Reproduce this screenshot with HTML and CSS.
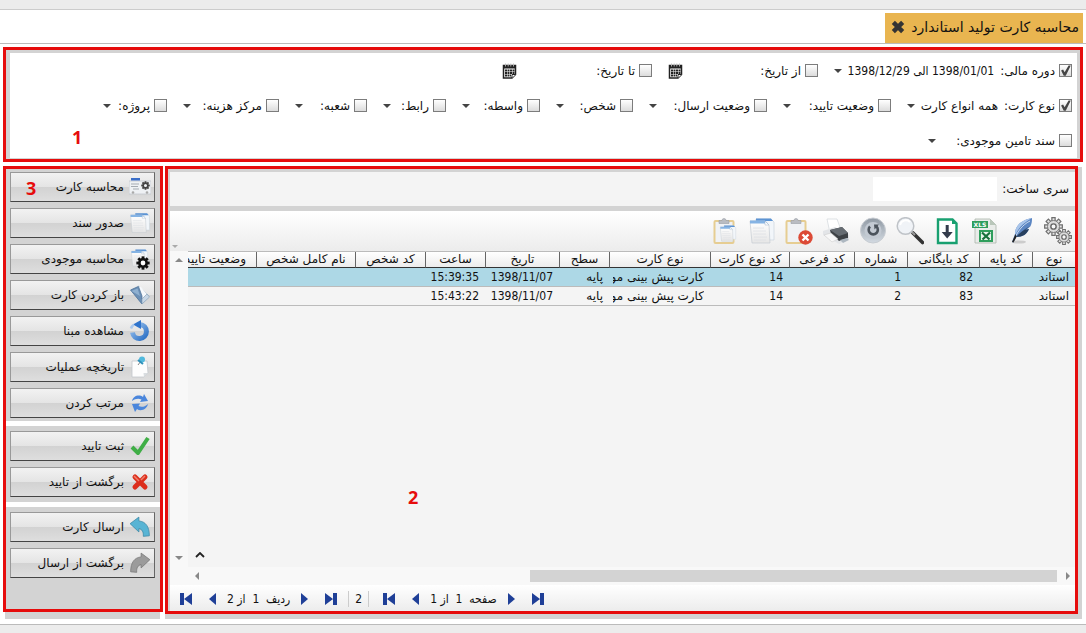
FILE: index.html
```html
<!DOCTYPE html>
<html lang="fa" dir="rtl">
<head>
<meta charset="utf-8">
<title>محاسبه کارت تولید استاندارد</title>
<link rel="stylesheet" href="styles.css">
</head>
<body>
<svg class="defs" aria-hidden="true">
  <defs>
    <linearGradient id="gBlue" x1="0" y1="0" x2="1" y2="1"><stop offset="0" stop-color="#9cc3ee"/><stop offset="1" stop-color="#2a6fc4"/></linearGradient>
    <linearGradient id="gPaper" x1="0" y1="0" x2="0" y2="1"><stop offset="0" stop-color="#ffffff"/><stop offset="1" stop-color="#e6e6e6"/></linearGradient>
    <linearGradient id="gGray" x1="0" y1="0" x2="0" y2="1"><stop offset="0" stop-color="#8f99a3"/><stop offset="1" stop-color="#d3dae2"/></linearGradient>
    <symbol id="docs" viewBox="0 0 28 28">
      <path d="M8 2h15l3 3v18H8z" fill="#f2f6fa" stroke="#ccd4dc" stroke-width=".7"/><path d="M8 1.500h15l2 2.500H8z" fill="#5c94d4"/>
      <path d="M2 4h15l4 4 1 18H4z" fill="url(#gPaper)" stroke="#c5cbd2" stroke-width=".7"/><path d="M2 3.500h15l3 3H2z" fill="#86b4e4"/><path d="M17 4v4h4z" fill="#fff" stroke="#9fb3c8" stroke-width=".5"/>
      <path d="M5 11h11M5 14h13M5 17h13M6 20h13M6 23h12" stroke="#dde0e4" stroke-width=".8"/>
    </symbol>
    <symbol id="clip" viewBox="0 0 28 28">
      <rect x="1.500" y="4" width="19" height="22" rx="1" fill="#f0f2f5" stroke="#e6cd92" stroke-width="2"/>
      <path d="M6 6.500V3.500h3a2 2 0 0 1 4 0H16v3z" fill="#b9bcc2" stroke="#999ea6" stroke-width=".6"/>
    </symbol>
    <symbol id="undo" viewBox="0 0 20 20"><path d="M1 7 9 1v3.500c6 .5 9.500 5 9.500 13.500l-5.500.5c.3-4-1-6.500-4-7v3z"/></symbol>
    <symbol id="cal" viewBox="0 0 15 16">
      <path d="M1.500 2.500h12v9l-3.500 3.500h-8.500z" fill="#fff" stroke="#222" stroke-width="1.500"/><path d="M1 2h13v3.500H1z" fill="#222"/><path d="M3.500 .5v3M6.200 .5v3M8.800 .5v3M11.500 .5v3" stroke="#bbb" stroke-width=".9"/><path d="M3 7.500h9.500M3 10h9.500M3 12.500h6" stroke="#222" stroke-width="1.800" stroke-dasharray="2 .5"/><path d="M10 15v-3.500h3.500" fill="#fff" stroke="#222"/>
    </symbol>
    <symbol id="first" viewBox="0 0 12 12"><path d="M0 0h4v12H0zM12 0v12L4 6z"/></symbol>
    <symbol id="last" viewBox="0 0 12 12"><path d="M8 0h4v12H8zM0 0v12l8-6z"/></symbol>
    <symbol id="prev" viewBox="0 0 7 12"><path d="M7 0v12L0 6z"/></symbol>
    <symbol id="next" viewBox="0 0 7 12"><path d="M0 0v12l7-6z"/></symbol>
    <symbol id="gear" viewBox="-10 -10 20 20">
      <g><path id="tooth" d="M-2-9.500h4v4h-4z"/><use href="#tooth" transform="rotate(45)"/><use href="#tooth" transform="rotate(90)"/><use href="#tooth" transform="rotate(135)"/><use href="#tooth" transform="rotate(180)"/><use href="#tooth" transform="rotate(225)"/><use href="#tooth" transform="rotate(270)"/><use href="#tooth" transform="rotate(315)"/></g>
      <circle r="5.200" fill="none" stroke="currentColor" stroke-width="3.600"/>
    </symbol>
    <symbol id="gearline" viewBox="-10 -10 20 20">
      <g fill="#e4e4e4" stroke="#6f6f6f" stroke-width="1.300"><path id="tooth2" d="M-1.700-5.500v-3.800h3.400v3.800"/><use href="#tooth2" transform="rotate(45)"/><use href="#tooth2" transform="rotate(90)"/><use href="#tooth2" transform="rotate(135)"/><use href="#tooth2" transform="rotate(180)"/><use href="#tooth2" transform="rotate(225)"/><use href="#tooth2" transform="rotate(270)"/><use href="#tooth2" transform="rotate(315)"/></g>
      <circle r="6.300" fill="#dcdcdc" stroke="#777" stroke-width="1"/><circle r="2.800" fill="#f8f8f8" stroke="#666" stroke-width="1.500"/>
    </symbol>
  </defs>
</svg>

<div class="strip strip-top"></div>
<nav class="tabs">
  <div class="tab"><span>محاسبه کارت تولید استاندارد</span>
    <button class="tab-close" aria-label="بستن"><svg viewBox="0 0 12 12"><path d="M2 2l8 8M10 2l-8 8" stroke="#333" stroke-width="3.800"/></svg></button>
  </div>
</nav>

<section class="filters">
  <div class="filters-body">
    <div class="filter-row row-period">
      <div class="field"><input type="checkbox" id="f1" checked><label for="f1">دوره مالی:</label><span class="drop"><select class="num" aria-label="دوره مالی"><option>1398/01/01 الی 1398/12/29</option></select></span></div>
      <div class="field"><input type="checkbox" id="f2"><label for="f2">از تاریخ:</label><input class="date" type="text" aria-label="از تاریخ"><button class="cal" aria-label="تقویم"><svg><use href="#cal"/></svg></button></div>
      <div class="field"><input type="checkbox" id="f3"><label for="f3">تا تاریخ:</label><input class="date" type="text" aria-label="تا تاریخ"><button class="cal" aria-label="تقویم"><svg><use href="#cal"/></svg></button></div>
    </div>
    <div class="filter-row row-kind">
      <div class="field"><input type="checkbox" id="k1" checked><label for="k1">نوع کارت:</label><span class="drop"><select aria-label="نوع کارت"><option>همه انواع کارت</option></select></span></div>
      <div class="field"><input type="checkbox" id="k2"><label for="k2">وضعیت تایید:</label><span class="drop"><select aria-label="وضعیت تایید"></select></span></div>
      <div class="field"><input type="checkbox" id="k3"><label for="k3">وضعیت ارسال:</label><span class="drop"><select aria-label="وضعیت ارسال"></select></span></div>
      <div class="field"><input type="checkbox" id="k4"><label for="k4">شخص:</label><span class="drop"><select aria-label="شخص"></select></span></div>
      <div class="field"><input type="checkbox" id="k5"><label for="k5">واسطه:</label><span class="drop"><select aria-label="واسطه"></select></span></div>
      <div class="field"><input type="checkbox" id="k6"><label for="k6">رابط:</label><span class="drop"><select aria-label="رابط"></select></span></div>
      <div class="field"><input type="checkbox" id="k7"><label for="k7">شعبه:</label><span class="drop"><select aria-label="شعبه"></select></span></div>
      <div class="field"><input type="checkbox" id="k8"><label for="k8">مرکز هزینه:</label><span class="drop"><select aria-label="مرکز هزینه"></select></span></div>
      <div class="field"><input type="checkbox" id="k9"><label for="k9">پروژه:</label><span class="drop"><select aria-label="پروژه"></select></span></div>
    </div>
    <div class="filter-row row-stock">
      <div class="field"><input type="checkbox" id="s1"><label for="s1">سند تامین موجودی:</label><span class="drop"><select aria-label="سند تامین موجودی"></select></span></div>
    </div>
  </div>
  <span class="mark mark-1">1</span>
</section>

<div class="workspace">
  <main class="panel">
    <div class="search"><label for="series">سری ساخت:</label><input id="series" type="text"></div>

    <div class="toolbar">
      <button aria-label="تنظیمات"><svg viewBox="0 0 28 28"><svg x="0" y="0" width="19" height="19"><use href="#gearline"/></svg><svg x="12" y="12" width="16" height="16"><use href="#gearline"/></svg></svg></button>
      <button aria-label="ویرایش"><svg viewBox="0 0 28 28"><ellipse cx="12" cy="25" rx="7" ry="1.600" fill="#ccc"/><path d="M25 1C14 3 8 9 8 17l-3 8 1.500.5L9 20c7 0 11-3 13-8l-2 .3 3.500-3C25 6 25 4 25 1z" fill="#5c86c2"/><path d="M25 1C14 3 8 9 8 17l1-.5C12 10 18 5 25 1z" fill="#a9c5ea"/><path d="M9 20c7 0 11-3 13-8l-4 1 5-4C17 13 12 16 9 20z" fill="#27405f"/><path d="M23 4C15 8 10 15 6 25" fill="none" stroke="#e4edf8" stroke-width=".8"/><path d="M8.500 17 5 25l1.500.5L9.500 20z" fill="#222"/></svg></button>
      <button aria-label="اکسل"><svg viewBox="0 0 28 28"><path d="M5 2h15l6 6v18H5z" fill="#e9ece9" stroke="#a9b5aa" stroke-width=".8"/><path d="M20 2v6h6z" fill="#b9c7ba"/><rect x="2" y="4" width="16" height="7" fill="#2f9e5c"/><text x="10" y="10" class="xls">XLS</text><path d="M9 13h14v12H9z" fill="#2f9e5c"/><path d="M11 15h10v8H11z" fill="#e7f3ea"/><path d="m12 15.500 7.500 7M20 15.500l-7.500 7" stroke="#17713c" stroke-width="2.200"/></svg></button>
      <button aria-label="دریافت"><svg viewBox="0 0 28 28"><path d="M5 2.500h14.500l4 4V26H5z" fill="#fff" stroke="#18a070" stroke-width="2.400"/><path d="M19 2v5h5" fill="#18a070"/><path d="M12.700 8h3v7h4l-5.500 6.500L8.700 15h4z" fill="#343c4c"/></svg></button>
      <button aria-label="جستجو"><svg viewBox="0 0 28 28"><path d="m17 16 9.500 9.500" stroke="#333" stroke-width="3.600" stroke-linecap="round"/><path d="m15 14 4 4" stroke="#999" stroke-width="2"/><circle cx="9.500" cy="9" r="8.300" fill="#f0f3f7" stroke="#bfc3c8" stroke-width="1.500"/><path d="M4 8a6 6 0 0 1 10-3" fill="none" stroke="#fff" stroke-width="2"/></svg></button>
      <button aria-label="بازخوانی"><svg viewBox="0 0 28 28"><circle cx="14" cy="13.500" r="12.500" fill="url(#gGray)" stroke="#c7ccd2"/><circle cx="14" cy="13.500" r="8.500" fill="#c3cad3"/><path d="M11 9.500a4.600 4.600 0 1 0 6.500 0" fill="none" stroke="#4b535c" stroke-width="2.600"/><path d="M15 7.500h5l-4.500 5z" fill="#4b535c"/></svg></button>
      <button aria-label="چاپ"><svg viewBox="0 0 28 28"><path d="M5 2h10l4 11-11 3z" fill="#fff" stroke="#d6dade" stroke-width=".8"/><path d="m1 14 12-4 14 8v4l-10 5L1 18z" fill="#e3e5e8"/><path d="m8 13 12-3 6 6v5l-9 3-8-7z" fill="#3e4246"/><path d="m8 13 12-3 6 6-9 3z" fill="#666c72"/><path d="m2 18 7-2 7 6-6 3z" fill="#f8f8f8" stroke="#c7c7c7" stroke-width=".5"/><path d="m18 23 7-2 2 2-6 3z" fill="#aeb8c1"/></svg></button>
      <button aria-label="حذف"><svg viewBox="0 0 28 28"><use href="#clip"/><circle cx="20.500" cy="20.500" r="7.200" fill="#dc4a36"/><path d="m17.500 17.500 6 6M23.500 17.500l-6 6" stroke="#fff" stroke-width="2.400"/></svg></button>
      <button aria-label="رونوشت"><svg><use href="#docs"/></svg></button>
      <button aria-label="چسباندن"><svg viewBox="0 0 28 28"><use href="#clip" x="2"/><svg x="8" y="7" width="18" height="19"><use href="#docs"/></svg></svg></button>
      <span class="grip"></span>
    </div>

    <div class="grid">
      <div class="grid-view">
        <table>
          <colgroup><col class="c43"><col class="c53"><col class="c72"><col class="c53"><col class="c65"><col class="c79"><col class="c101"><col class="c50"><col class="c74"><col class="c60"><col class="c70"><col class="c99"><col></colgroup>
          <thead><tr><th>نوع</th><th>کد پایه</th><th>کد بایگانی</th><th>شماره</th><th>کد فرعی</th><th>کد نوع کارت</th><th>نوع کارت</th><th>سطح</th><th>تاریخ</th><th>ساعت</th><th>کد شخص</th><th>نام کامل شخص</th><th>وضعیت تایید</th></tr></thead>
          <tbody>
            <tr class="selected"><td><div>استاند</div></td><td></td><td class="num">82</td><td class="num">1</td><td></td><td class="num">14</td><td><div>کارت پیش بینی مواد</div></td><td>پایه</td><td class="num">1398/11/07</td><td class="num">15:39:35</td><td></td><td></td><td></td></tr>
            <tr><td><div>استاند</div></td><td></td><td class="num">83</td><td class="num">2</td><td></td><td class="num">14</td><td><div>کارت پیش بینی مواد</div></td><td>پایه</td><td class="num">1398/11/07</td><td class="num">15:43:22</td><td></td><td></td><td></td></tr>
          </tbody>
        </table>
        <button class="collapse" aria-label="بالا"><svg viewBox="0 0 10 6"><path d="m1 5 4-4 4 4" fill="none" stroke="#222" stroke-width="1.800"/></svg></button>
      </div>
      <div class="vscroll"><i class="arrow up"></i><i class="arrow down"></i></div>
    </div>
    <div class="hscroll"><i class="arrow right"></i><div class="track"><div class="thumb"></div></div><i class="arrow left"></i></div>

    <div class="pager num" dir="ltr">
      <button class="wide to-first" aria-label="اولین ردیف"><svg><use href="#first"/></svg></button>
      <button aria-label="ردیف قبل"><svg><use href="#prev"/></svg></button>
      <span class="page-text" dir="rtl">ردیف&nbsp; 1 &nbsp;از 2</span>
      <button aria-label="ردیف بعد"><svg><use href="#next"/></svg></button>
      <button class="wide to-last" aria-label="آخرین ردیف"><svg><use href="#last"/></svg></button>
      <span class="total">2</span>
      <button class="wide to-first" aria-label="اولین صفحه"><svg><use href="#first"/></svg></button>
      <button aria-label="صفحه قبل"><svg><use href="#prev"/></svg></button>
      <span class="page-text" dir="rtl">صفحه&nbsp; 1 &nbsp;از 1</span>
      <button aria-label="صفحه بعد"><svg><use href="#next"/></svg></button>
      <button class="wide to-last" aria-label="آخرین صفحه"><svg><use href="#last"/></svg></button>
    </div>
    <span class="mark mark-2">2</span>
  </main>

  <aside class="side">
    <div class="group group-main">
      <button><svg viewBox="0 0 22 20"><path d="M0 4h22v13H0z" fill="#eef1f4" stroke="#c3c8ce" stroke-width=".8"/><path d="M2 1h9v2.500H2z" fill="#3c6fc8"/><path d="M2 7h8M2 9.500h7M4 12h6" stroke="#a5abb2"/><circle cx="4" cy="15.500" r="1.300" fill="#aaa"/><circle cx="18" cy="15.500" r="1.300" fill="#aaa"/><svg x="12" y="4" width="9" height="9" fill="#444" color="#444"><use href="#gear"/></svg></svg>محاسبه کارت</button>
      <button><svg><use href="#docs"/></svg>صدور سند</button>
      <button><svg viewBox="0 0 22 22"><svg x="1" y="0" width="19" height="20"><use href="#docs"/></svg><circle cx="14" cy="15" r="3.500" fill="#fff"/><svg x="7" y="8" width="14" height="14" fill="#111" color="#111"><use href="#gear"/></svg></svg>محاسبه موجودی</button>
      <button><svg viewBox="0 0 22 22"><path d="m2 6 8-4 10 10-7 8z" fill="#dfe8f0" stroke="#9ab0c4" stroke-width=".7"/><path d="m9 2 3 1 8 10-6 5z" fill="#f6f9fc"/><path d="m1.500 6 8-3.500L13 12v8z" fill="#6c90b6" stroke="#4a6f95" stroke-width=".7"/><path d="m2.500 7 6-2.500L11 12z" fill="#8fb0d0"/><path d="m13 20 7.500-7-2.500-3-5 5z" fill="#c8d7e6" stroke="#8aa3ba" stroke-width=".7"/></svg>باز کردن کارت</button>
      <button><svg viewBox="0 0 22 22"><path d="M11 4.500a7 7 0 1 1-7.500 8" fill="none" stroke="url(#gBlue)" stroke-width="5"/><path d="M12 0v9L4 4.500z" fill="#2f74cc"/><path d="M2 8.500a8 8 0 0 1 3-4" fill="none" stroke="#a8c8ee" stroke-width="2.500"/></svg>مشاهده مبنا</button>
      <button><svg viewBox="0 0 22 22"><path d="M3 5h15l1 12-4 4H3z" fill="#fdfdfd" stroke="#c3c7cb" stroke-width=".8"/><path d="m19 17-4 4-.5-4z" fill="#d9dde0"/><path d="M9 9 12 5" stroke="#888"/><circle cx="13" cy="3.500" r="3" fill="#51b9dd"/><path d="m9 4 5 4" stroke="#2e91ba" stroke-width="2"/></svg>تاریخچه عملیات</button>
      <button><svg viewBox="0 0 22 22" fill="#4a86dc"><path d="M3 9c1-5 7-7 11-4l1-3 4 7-8 1 1.500-2.500C9 6 6 7 3 9z"/><path d="M19 12c-1 5-7 8-11 5l-2 3-3-8 8-.5L9.500 14c3 1.500 6 1 9.500-2z"/></svg>مرتب کردن</button>
    </div>
    <div class="group">
      <button><svg viewBox="0 0 22 22"><path d="m3 12 6 6L19 3" fill="none" stroke="#3fae46" stroke-width="4" stroke-linejoin="round"/></svg>ثبت تایید</button>
      <button><svg viewBox="0 0 22 22"><path d="m6 6 10 10M16 6 6 16" stroke="#dc2e1c" stroke-width="5" stroke-linecap="round"/><path d="m5 5 5 5M16 5l-4 4" stroke="#f0806c" stroke-width="1.500"/></svg>برگشت از تایید</button>
    </div>
    <div class="group group-last">
      <button><svg fill="#58b4d4" stroke="#3b87a5" stroke-width=".7"><use href="#undo"/></svg>ارسال کارت</button>
      <button><svg class="flip" fill="#9b9b9b" stroke="#777" stroke-width=".7"><use href="#undo"/></svg>برگشت از ارسال</button>
    </div>
    <span class="mark mark-3">3</span>
  </aside>
</div>
<div class="strip strip-bottom"></div>
</body>
</html>
```
FILE: styles.css
```css
* { box-sizing: border-box; }
body {
  margin: 0;
  min-height: 100vh;
  display: flex;
  flex-direction: column;
  background: #fff;
  color: #111;
  font: 12px/16px "DejaVu Sans", sans-serif;
}
button, input, select { font: inherit; color: inherit; margin: 0; padding: 0; border: 0; background: none; }
svg { display: block; }
.defs { position: absolute; width: 0; height: 0; }
.num { font-family: "DejaVu Sans Condensed", "DejaVu Sans", sans-serif; }

.strip { height: 10px; background: #ececec; }
.strip-top { border-bottom: 1px solid #ccc; }
.strip-bottom { height: 9px; border-top: 1px solid #bbb; }

.tabs { height: 34px; padding: 3px 3px 0; border-bottom: 1px solid #bbb; display: flex; }
.tab {
  display: flex;
  align-items: center;
  gap: 6px;
  width: 198px;
  padding: 0 4px 2px 6px;
  justify-content: space-between;
  background: #e9b550;
  font-size: 14px;
  line-height: 20px;
  white-space: nowrap;
}
.tab-close svg { width: 14px; height: 14px; }

.filters { position: relative; margin: 3px 3px 0; border: 3px solid #e60c0c; padding: 3px 3px 1px 4px; background: #d3d3d3; }
.filters-body { background: #fff; padding: 0 5px; }
.filter-row { display: grid; column-gap: 16px; height: 35px; align-items: center; white-space: nowrap; }
.row-period { grid-template-columns: 238px 150px 150px; }
.row-kind { grid-template-columns: 165px 108px 118px 77px 78px 63px 72px 96px 64px; }
.row-stock { grid-template-columns: 144px; }
.field { display: flex; align-items: center; gap: 4px; }
.field input[type="checkbox"] {
  appearance: none;
  flex: none;
  width: 13px;
  height: 13px;
  border: 1px solid #7c7c7c;
  background: linear-gradient(#fff, #dcdcdc);
}
.field input:checked::before {
  content: "";
  display: block;
  width: 11px;
  height: 11px;
  background: #444;
  clip-path: polygon(10% 50%, 28% 42%, 42% 66%, 78% 4%, 98% 4%, 52% 98%, 34% 98%);
}
.drop { position: relative; flex: 1; min-width: 0; padding-right: 2px; }
.drop select { appearance: none; width: 100%; height: 18px; display: block; }
.drop::after {
  content: "";
  position: absolute;
  left: 0;
  top: 7px;
  border: 4px solid transparent;
  border-top-color: #444;
  border-bottom: 0;
}
.date { flex: 1; min-width: 0; height: 18px; }
.cal svg { width: 15px; height: 16px; }

.workspace { flex: 1; display: flex; gap: 5px; padding: 5px 4px 5px 5px; }
.panel { position: relative; flex: 1; min-width: 0; display: flex; flex-direction: column; background: #d3d3d3; padding: 5px 7px 8px 5px; }
.panel::after, .side::after { content: ""; position: absolute; border: 3px solid #e60c0c; pointer-events: none; }
.panel::after { inset: -1px 4px 5px 0; }
.side::after { inset: -1px -3px 7px -2px; }

.search { display: flex; align-items: center; gap: 5px; height: 34px; padding: 0 6px; margin-bottom: 5px; background: #f4f4f4; }
.search input { width: 124px; height: 24px; background: #fff; }

.toolbar { position: relative; display: flex; align-items: center; gap: 9px; height: 40px; padding: 0 3px; background: linear-gradient(#fff, #ececec); }
.toolbar button > svg { width: 28px; height: 28px; }
.xls { font: bold 6px "DejaVu Sans", sans-serif; fill: #fff; text-anchor: middle; direction: ltr; }
.grip { position: absolute; left: 2px; bottom: 3px; border: 3px solid transparent; border-top-color: #aaa; border-bottom: 0; }

.grid { flex: 1; display: flex; background: #f4f4f4; }
.grid-view { position: relative; flex: 1; min-width: 0; overflow: hidden; }
table { width: 100%; table-layout: fixed; border-collapse: separate; border-spacing: 0; border-top: 1px solid #bbb; }
th, td { padding: 0 6px 0 4px; overflow: hidden; white-space: nowrap; font-weight: normal; }
th { padding: 0; line-height: 15px; background: linear-gradient(#fff, #ececec); border-left: 1px solid #666; border-bottom: 1px solid #333; text-align: center; }
th:last-child { border-left: 0; padding-right: 10px; text-align: right; }
td { height: 19px; line-height: 16px; text-align: right; border-bottom: 1px solid #bbb; }
td div { overflow: hidden; }
.selected td { background: #add8e6; }
.c43 { width: 43px; } .c50 { width: 50px; } .c53 { width: 53px; } .c60 { width: 60px; }
.c65 { width: 65px; } .c70 { width: 70px; } .c72 { width: 72px; } .c74 { width: 74px; }
.c79 { width: 79px; } .c99 { width: 99px; } .c101 { width: 101px; }
.collapse { position: absolute; left: 7px; bottom: 9px; }
.collapse svg { width: 10px; height: 6px; }

.vscroll { width: 18px; background: #f8f8f8; display: flex; flex-direction: column; align-items: center; justify-content: space-between; padding: 7px 0; }
.arrow { width: 0; height: 0; border: 4px solid transparent; }
.up { border-bottom-color: #888; border-top: 0; }
.down { border-top-color: #888; border-bottom: 0; }
.right { border-left-color: #888; border-right: 0; }
.left { border-right-color: #888; border-left: 0; }
.hscroll { display: flex; align-items: center; gap: 8px; height: 18px; padding: 0 5px 0 25px; background: #f8f8f8; }
.track { flex: 1; padding-right: 1px; }
.thumb { width: 62%; height: 12px; background: #d3d3d3; }

.pager { display: flex; align-items: center; height: 26px; padding: 2px 10px 0; gap: 11px; background: linear-gradient(#fff, #ececec); }
.pager svg { width: 7px; height: 12px; fill: #1f3f97; }
.pager .wide svg { width: 12px; }
.to-first { margin-right: 6px; }
.to-last { margin-left: 6px; }
.page-text { white-space: nowrap; }
.total { border: 1px solid #ccc; border-width: 0 1px; padding: 0 6px; }
.total + .to-first { margin-left: 3px; }

.side { position: relative; width: 155px; display: flex; flex-direction: column; gap: 5px; }
.group { display: flex; flex-direction: column; gap: 6px; padding: 5px; background: #d3d3d3; }
.group-main { padding-bottom: 3px; }
.group-last { flex: 1; }
.group button {
  display: flex;
  align-items: center;
  gap: 5px;
  height: 30px;
  padding: 0 3px 0 0;
  border: 1px solid #999;
  border-bottom-color: #444;
  border-right-color: #666;
  background: linear-gradient(#f2f2f2, #e4e4e4 50%, #d2d2d2 50%, #dedede);
  white-space: nowrap;
}
.group button > svg { flex: none; width: 22px; height: 22px; }
.flip { transform: scaleX(-1); }

.mark { position: absolute; color: #e60c0c; font: bold 18px/20px "Open Sans", sans-serif; }
.mark-1 { left: 66px; bottom: 12px; }
.mark-2 { left: 243px; bottom: 112px; }
.mark-3 { left: 21px; top: 11px; }
```
